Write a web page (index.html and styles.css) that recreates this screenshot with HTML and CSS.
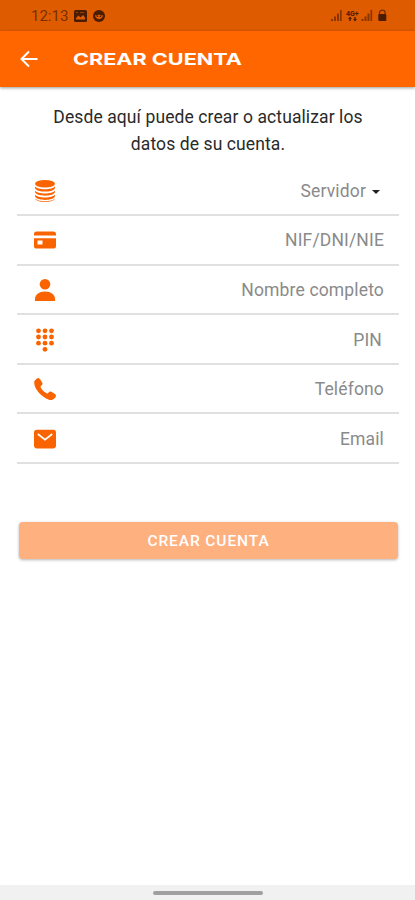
FILE: index.html
```html
<!DOCTYPE html>
<html lang="es">
<head>
<meta charset="utf-8">
<title>Crear cuenta</title>
<link rel="stylesheet" href="styles.css">
</head>
<body>
<div class="status">
  <span class="clock">12:13</span>
  <svg class="st-pic" width="13" height="12" viewBox="0 0 13 12"><rect width="13" height="12" rx="1.5"/><path d="M2 9.500V8l2.500-2.500 2 2L9 5l2 2.500v2z" fill="#df5b00"/><path d="M2 2.500h2M6 2.500h4" stroke="#a04000"/></svg>
  <svg class="st-face" width="12" height="12" viewBox="0 0 12 12"><circle cx="6" cy="6" r="6"/><path d="M2 5l2 .8L6 4.500l2 1.300L10 5C10 10.500 2 10.500 2 5z" fill="#df5b00"/><path d="M3.800 6.500h1.400M6.800 6.500h1.400" stroke="#4b1c00"/></svg>
  <svg class="st-right" width="56" height="14" viewBox="0 0 56 14">
    <g id="signal" fill="#8a3500"><rect x="0" y="10" width="2" height="2"/><rect x="3" y="7.500" width="2" height="4.500"/><rect x="6" y="4.500" width="2" height="7.500"/><rect x="9" y="1" width="1.700" height="11"/></g>
    <use href="#signal" x="30.500"/>
    <text x="15" y="6.500" class="net">4G+</text>
    <path d="M19 7.500l2 2.500h-1.300v2h-1.400v-2H17zM24 12.500l-2-2.500h1.300V8h1.400v2H26z"/>
    <path d="M48.500 5V4a2.800 2.800 0 0 1 5.600 0v1" fill="none" stroke="#7a2e00" stroke-width="1.300"/><rect x="47.300" y="5" width="8" height="7" rx="1"/>
  </svg>
</div>
<header class="bar">
  <svg class="back" width="18" height="18" viewBox="0 0 18 18"><path d="M9 1.500L1.500 9 9 16.500M1.800 9H17.500"/></svg>
  <svg class="title" width="172" height="20" viewBox="0 0 172 20"><text x="0" y="16" textLength="169" lengthAdjust="spacingAndGlyphs">CREAR CUENTA</text></svg>
</header>
<main>
  <p class="intro">Desde aquí puede crear o actualizar los<br>datos de su cuenta.</p>
  <div class="form">
    <div class="row">
      <svg class="icon" viewBox="0 0 24 24"><ellipse cx="12" cy="4.800" rx="10" ry="3.800"/><path d="M2 7.200c2 4 18 4 20 0v1.700c-1 4.800-19 4.800-20 0zM2 11.400c2 4 18 4 20 0v1.700c-1 4.800-19 4.800-20 0zM2 15.600c2 4 18 4 20 0v1.700c-1 4.800-19 4.800-20 0zM2 19.300c2 4 18 4 20 0-1 5-19 5-20 0z"/></svg>
      <span class="field">Servidor<i class="caret"></i></span>
    </div>
    <div class="row">
      <svg class="icon" viewBox="0 0 24 24"><path d="M1 7.500V6a2.600 2.600 0 0 1 2.600-2.600h16.800A2.600 2.600 0 0 1 23 6v1.500zM1 10.200h22V18a2.600 2.600 0 0 1-2.600 2.600H3.600A2.600 2.600 0 0 1 1 18zM4.500 12.600v4h5v-4z" fill-rule="evenodd"/></svg>
      <span class="field">NIF/DNI/NIE</span>
    </div>
    <div class="row">
      <svg class="icon" viewBox="0 0 24 24"><circle cx="12" cy="6.200" r="5.300"/><path d="M2 23v-2c0-4.300 4-7.500 10-7.500s10 3.200 10 7.500v2z"/></svg>
      <span class="field">Nombre completo</span>
    </div>
    <div class="row">
      <svg class="icon" viewBox="0 0 24 24"><g id="dots"><circle cx="5.500" cy="2.800" r="2.400"/><circle cx="12" cy="2.800" r="2.400"/><circle cx="18.500" cy="2.800" r="2.400"/></g><use href="#dots" y="6.200"/><use href="#dots" y="12.400"/><circle cx="12" cy="21.300" r="2.400"/></svg>
      <span class="field pin">PIN</span>
    </div>
    <div class="row">
      <svg class="icon" viewBox="0 0 24 24"><path d="M1.200 5.200C1 4 4 .8 5.200 1c1.800.3 4.600 4.800 4.300 6-.3 1.500-2.400 1.700-1.900 3 .9 2.600 3.700 5.400 6.300 6.400 1.400.5 1.700-1.700 3.200-1.900 1.300-.2 5.700 2.500 5.900 4.200.2 1.300-3.100 4.300-4.500 4.300C12.500 23.100 1 13.600 1.200 5.200z"/></svg>
      <span class="field">Teléfono</span>
    </div>
    <div class="row">
      <svg class="icon" viewBox="0 0 24 24"><rect x="1" y="2.800" width="22" height="18.600" rx="2.800"/><path d="M4.800 7l7.200 5.700L19.200 7" fill="none" stroke="#fff" stroke-width="1.600"/></svg>
      <span class="field">Email</span>
    </div>
  </div>
  <button class="submit">CREAR CUENTA</button>
</main>
<footer class="nav"><div class="handle"></div></footer>
</body>
</html>
```

FILE: styles.css
```css
* { box-sizing: border-box; }
body {
  margin: 0;
  height: 900px;
  display: flex;
  flex-direction: column;
  overflow: hidden;
  background: #fff;
  font-family: Roboto, sans-serif;
}
.status {
  height: 31px;
  flex: none;
  display: flex;
  align-items: center;
  padding: 1px 28px 0 31px;
  background: #df5b00;
  fill: #4b1c00;
}
.clock { width: 43px; font-size: 15px; color: #7a2f00; }
.st-face { margin-left: 6px; }
.st-right { margin-left: auto; }
.net { font-size: 7px; font-weight: 700; }
.bar {
  height: 56px;
  flex: none;
  display: flex;
  align-items: center;
  padding-left: 20px;
  background: #f60;
  box-shadow: 0 1px 3px rgba(0, 0, 0, .4);
}
.back { fill: none; stroke: #fff; stroke-width: 2; }
.title { margin-left: 35px; fill: #fff; font: 700 16px Inter, sans-serif; }
main { flex: 1; padding: 17px 16px 0 17px; }
.intro {
  margin: 0;
  height: 62.500px;
  text-align: center;
  font-size: 17.500px;
  line-height: 26.500px;
  letter-spacing: .1px;
  color: #2a2a2a;
}
.form { display: grid; grid-template-rows: repeat(6, 49.600px); }
.row {
  display: flex;
  align-items: center;
  justify-content: space-between;
  padding: 1px 15px 0 16px;
  border-bottom: 2px solid #e0e0e0;
}
.icon { width: 24px; height: 24px; fill: #f96400; }
.field { font-size: 17.500px; letter-spacing: .15px; color: #8a8a8a; }
.pin { margin-right: 2px; }
.caret {
  display: inline-block;
  margin: 0 4px 3px 6px;
  border: 4.500px solid transparent;
  border-top-color: #222;
  border-bottom: 0;
}
.submit {
  display: block;
  width: 379px;
  height: 37px;
  margin: 58px 1px 0 2px;
  border: 0;
  border-radius: 4px;
  background: #ffb07f;
  box-shadow: 0 1px 3px rgba(0, 0, 0, .3);
  color: #fff;
  font: 500 15.500px Roboto, sans-serif;
  letter-spacing: .900px;
}
.nav {
  height: 15px;
  flex: none;
  display: flex;
  justify-content: center;
  padding-top: 6px;
  background: #f1f1f1;
}
.handle { width: 110px; height: 4px; border-radius: 2px; background: #a0a0a0; }
```
